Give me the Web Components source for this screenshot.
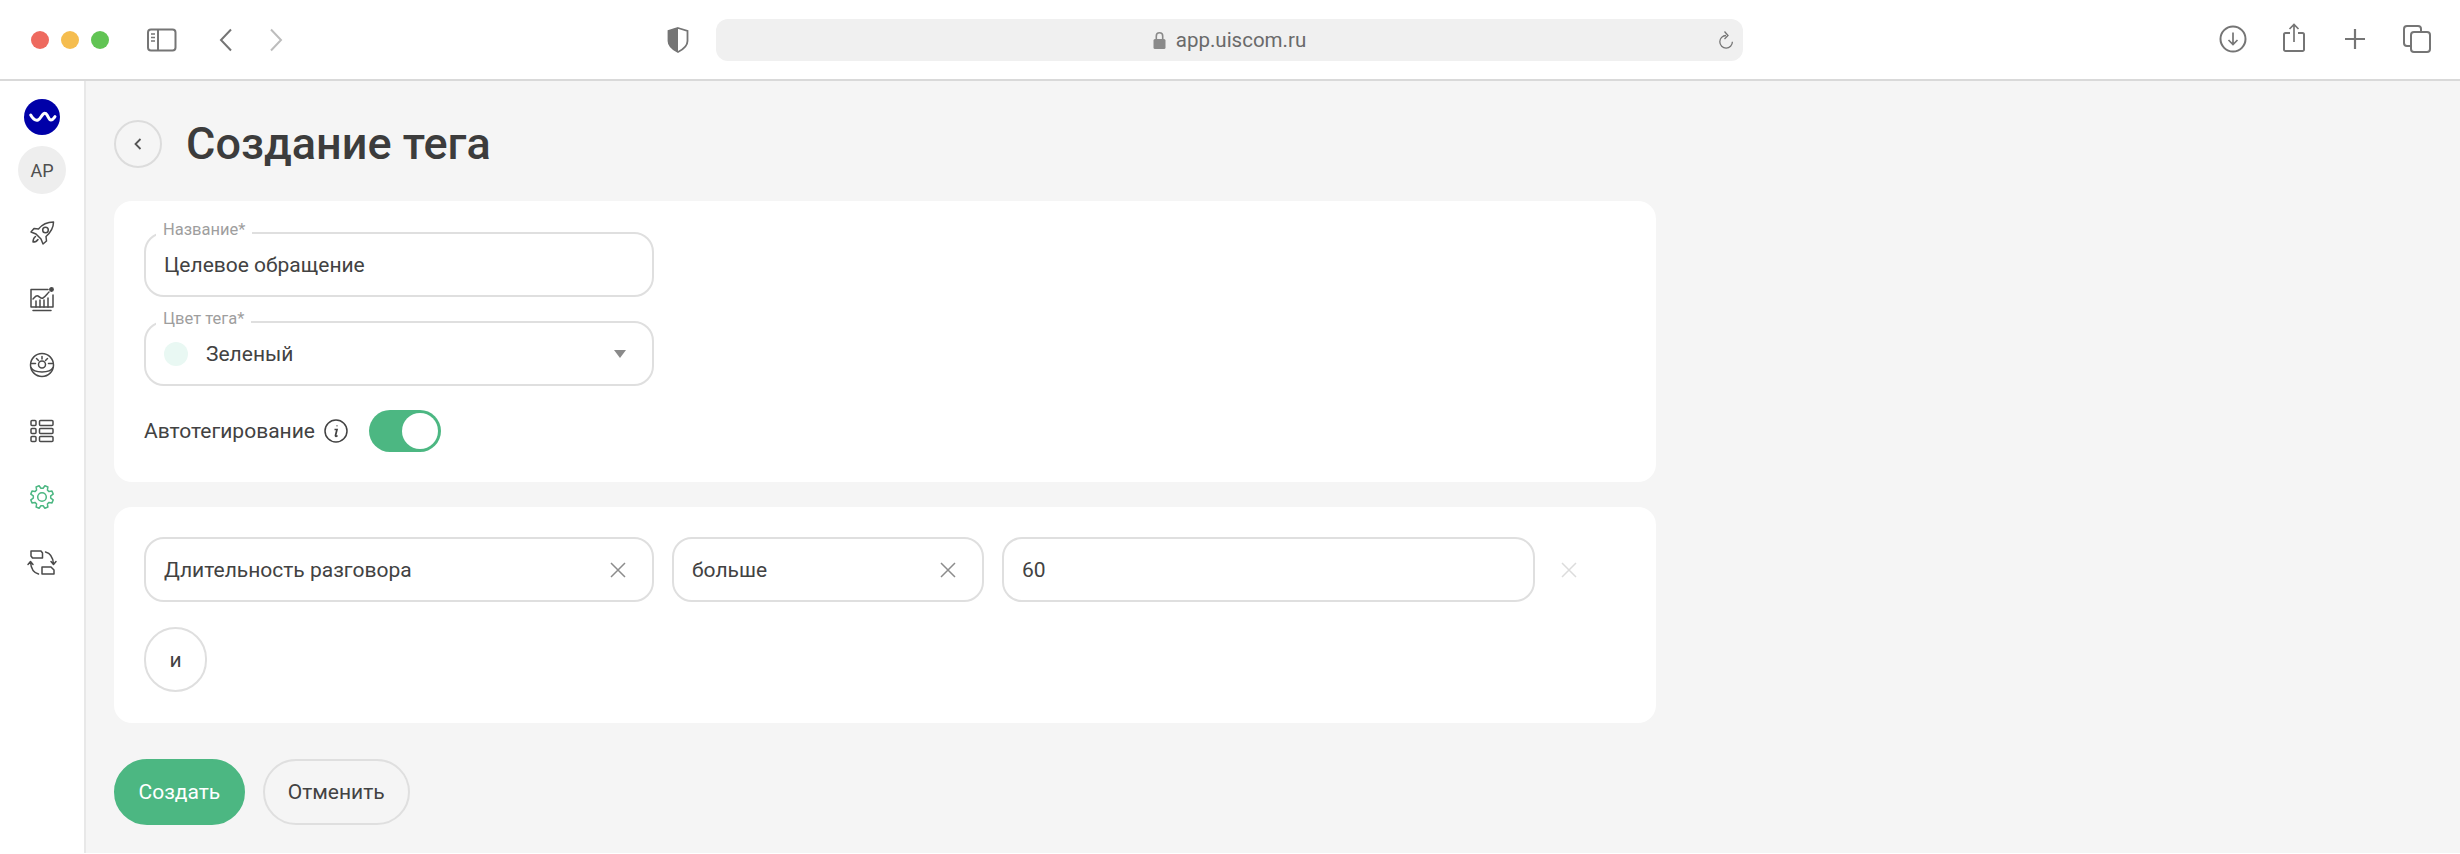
<!DOCTYPE html>
<html lang="ru">
<head>
<meta charset="utf-8">
<title>Создание тега</title>
<style>
  html, body { margin: 0; height: 100%; background: #fff; }
  body { font-family: Roboto, "Liberation Sans", sans-serif; overflow: hidden; }
  tag-app { width: 2460px; height: 854px; }
</style>
</head>
<body>
<tag-app></tag-app>
<script>
/**
 * Browser chrome above the page: traffic lights, address bar, tool icons.
 */
class BrowserBar extends HTMLElement {
  constructor () {
    super();
    this.attachShadow({ mode: 'open' }).innerHTML = `
      <style>
        :host { display: flex; align-items: center; flex: none; height: 79px; box-sizing: border-box; position: relative; background: #fff; padding-left: 31px; }
        .lights { display: flex; gap: 12px; }
        .lights i { width: 18px; height: 18px; border-radius: 50%; }
        svg { display: block; flex: none; fill: none; stroke: #757575; }
        .url { margin-left: 27px; width: 1027px; height: 42px; border-radius: 12px; background: #f0f0f0; display: flex; align-items: center; justify-content: center; position: relative; font-size: 20.500px; color: #6a6a6a; gap: 10px; flex: none; }
        .url .reload { position: absolute; right: 9px; top: 11px; }
      </style>
      <div class="lights">
        <i style="background:#ee6a5f"></i><i style="background:#f5bd4f"></i><i style="background:#61c454"></i>
      </div>
      <svg style="margin-left:38px" width="30" height="24" viewBox="0 0 30 24" stroke-width="2">
        <rect x="1" y="1.500" width="27.500" height="21" rx="3"/><path d="M11 1.500v21"/>
        <path d="M4 6h4M4 9.500h4M4 13h4" stroke-width="1.500"/>
      </svg>
      <svg style="margin-left:42px" width="14" height="24" viewBox="0 0 14 24" stroke-width="2"><path d="M12 1.500 2 12l10 10.500"/></svg>
      <svg style="margin-left:36px;stroke:#bdbdbd" width="14" height="24" viewBox="0 0 14 24" stroke-width="2"><path d="m2 1.500 10 10.500L2 22.500"/></svg>
      <svg style="margin-left:384px" width="22" height="26" viewBox="0 0 22 26" stroke-width="1.800">
        <path d="M11 1 20.500 4v10c0 5-4.500 8.500-9.500 11C6 22.500 1.500 19 1.500 14V4z"/>
        <path d="M11 1 1.500 4v10c0 5 4.500 8.500 9.500 11z" fill="#757575" stroke="none"/>
      </svg>
      <div class="url">
        <svg width="13" height="18" viewBox="0 0 13 18" style="stroke:none;fill:#8a8a8a"><path d="M2.500 8V5a4 4 0 0 1 8 0v3H8.900V5a2.400 2.400 0 0 0-4.800 0v3z"/><rect x=".5" y="8" width="12" height="10" rx="1.500"/></svg>
        <span>app.uiscom.ru</span>
        <svg class="reload" width="16" height="20" viewBox="0 0 16 20" stroke-width="1.300"><path d="M8 5.500a6.300 6.300 0 1 0 6.400 6.300"/><path d="M6.500 1.500 10 5.500 6.500 9"/></svg>
      </div>
      <svg style="position:absolute;left:2219px;top:25px" width="28" height="28" viewBox="0 0 28 28" stroke-width="2"><circle cx="14" cy="14" r="12.500"/><path d="M14 7.500v12M9.500 15l4.500 4.500 4.500-4.500" stroke-width="1.700"/></svg>
      <svg style="position:absolute;left:2283px;top:23px" width="22" height="30" viewBox="0 0 22 30" stroke-width="2"><path d="M7 10H2.500a1.500 1.500 0 0 0-1.500 1.500v15A1.500 1.500 0 0 0 2.500 28h17a1.500 1.500 0 0 0 1.500-1.500v-15a1.500 1.500 0 0 0-1.500-1.500H15"/><path d="M11 19V2M6.500 6 11 1.500 15.500 6" stroke-width="1.700"/></svg>
      <svg style="position:absolute;left:2344px;top:28px" width="22" height="22" viewBox="0 0 22 22" stroke-width="2.200"><path d="M11 1v20M1 11h20"/></svg>
      <svg style="position:absolute;left:2403px;top:25px" width="28" height="28" viewBox="0 0 28 28" stroke-width="2"><path d="M7 21H4a3 3 0 0 1-3-3V4a3 3 0 0 1 3-3h11a3 3 0 0 1 3 3v3"/><rect x="8" y="7" width="19" height="20" rx="3"/></svg>
    `;
  }
}

/**
 * Builds the outline of a gear with eight teeth for a 24x24 box.
 * @returns {string} The path data.
 */
function gearPath () {
  const points = [];
  for (let tooth = 0; tooth < 8; tooth++) {
    const angle = tooth * 45 + 22.5;
    [[-15, 8.8], [-8, 11.6], [8, 11.6], [15, 8.8]].forEach(([shift, radius]) => {
      const rad = (angle + shift) * Math.PI / 180;
      points.push((12 + radius * Math.cos(rad)).toFixed(1) + ' ' + (12 + radius * Math.sin(rad)).toFixed(1));
    });
  }
  return 'M' + points.join('L') + 'Z';
}

/**
 * Narrow navigation rail with the product logo, avatar and section icons.
 */
class SideRail extends HTMLElement {
  constructor () {
    super();
    this.attachShadow({ mode: 'open' }).innerHTML = `
      <style>
        :host { display: flex; flex-direction: column; align-items: center; flex: none; width: 84px; background: #fff; padding-top: 18px; box-sizing: border-box; }
        svg { display: block; fill: none; stroke: #4a4a4a; stroke-width: 1.500; stroke-linejoin: round; stroke-linecap: round; overflow: visible; }
        .logo { stroke: none; }
        .avatar { width: 48px; height: 48px; border-radius: 50%; background: #eeeeee; color: #4f4f4f; font-size: 18px; display: flex; align-items: center; justify-content: center; margin: 11px 0 27px; }
        .items { display: flex; flex-direction: column; gap: 42px; }
        .items svg { width: 24px; height: 24px; }
      </style>
      <svg class="logo" width="36" height="36" viewBox="0 0 36 36"><circle cx="18" cy="18" r="18" fill="#0000a8"/><path d="M6.700 16C9 20 11 22 14 21c3-1 4-7 7-6.700 3 .2 3 6.700 6 6.700 2 0 3-2 4-3.300" fill="none" stroke="#fff" stroke-width="3"/></svg>
      <div class="avatar">АР</div>
      <div class="items">
        <svg viewBox="0 0 24 24"><path d="M23.500 1C17 1 12.500 3 8.500 8L4 7.500 1 11l5 2 5 5 2 5 3.500-3-.5-4.500C20.500 11.500 23.500 7.500 23.500 1z"/><circle cx="15.500" cy="9" r="2.800"/><path d="M5.500 15.500C4 16.500 3 18 3 21c2.500 0 4-1 5-2.500"/></svg>
        <svg viewBox="0 0 24 24"><path d="M23 8v12H1V2.500h17"/><path d="M3 23.500h18"/><path d="M3 12c2-2 3-4 5-3s3 3 5 2 4-4 6-6"/><path d="M6 20v-6M10 20v-7M14 20v-7M18 20v-9"/><circle cx="21.500" cy="2.500" r="1.700" fill="#4a4a4a"/></svg>
        <svg viewBox="0 0 24 24"><circle cx="12" cy="12" r="11.500"/><circle cx="12" cy="11.500" r="3.500"/><path d="M1 14.500c3 6 19 6 22 0M1.500 10.500h4M18.500 10.500h4M12 3.500v2.500M6.500 5.500l2 2M17.500 5.500l-2 2"/></svg>
        <svg viewBox="0 0 24 24"><rect x="1" y="1.500" width="5" height="5" rx="1"/><rect x="9.500" y="1.500" width="13.500" height="5" rx="1"/><rect x="1" y="9.500" width="5" height="5" rx="1"/><rect x="9.500" y="9.500" width="13.500" height="5" rx="1"/><rect x="1" y="17.500" width="5" height="5" rx="1"/><rect x="9.500" y="17.500" width="13.500" height="5" rx="1"/></svg>
        <svg viewBox="0 0 24 24" style="stroke:#4cb782"><circle cx="12" cy="12" r="4.300"/><path d="${gearPath()}"/></svg>
        <svg viewBox="0 0 24 24"><path d="M1 0h10l1.500 2v5H2.500L1 5zM12 16h9l3 3v4H12z"/><path d="M15.500 1c4 1 7.500 5 8 12M21 10.500l2.500 3 2.500-3M8.500 23C4.500 22 1 18 .5 11M-2 13.500l2.500-3 2.500 3"/></svg>
      </div>
    `;
  }
}

/**
 * Outlined rounded field. Attribute "label" draws a notched legend,
 * the value itself comes through the slot.
 */
class OutlineField extends HTMLElement {
  constructor () {
    super();
    const label = this.getAttribute('label');
    const closer = this.hasAttribute('clearable');
    this.attachShadow({ mode: 'open' }).innerHTML = `
      <style>
        :host { display: flex; align-items: center; box-sizing: border-box; height: 65px; position: relative; border: 2px solid #dfdfdf; border-radius: 20px; background: #fff; padding: 0 26px 0 18px; font-size: 21px; color: #424242; }
        .label { position: absolute; left: 10px; top: -13px; padding: 0 7px; background: #fff; font-size: 16.500px; line-height: 18px; color: #9e9e9e; }
        .value { flex: 1; display: flex; align-items: center; }
        svg { display: block; stroke: #8c8c8c; stroke-width: 1.500; fill: none; }
      </style>
      ${label ? `<span class="label">${label}</span>` : ''}
      <div class="value"><slot></slot></div>
      <slot name="end">${closer ? '<svg width="16" height="16" viewBox="0 0 16 16"><path d="M1 1l14 14M15 1 1 15"/></svg>' : ''}</slot>
    `;
  }
}

/**
 * Pill shaped button, "primary" attribute gives the filled green one.
 */
class PillButton extends HTMLElement {
  constructor () {
    super();
    this.attachShadow({ mode: 'open' }).innerHTML = `
      <style>
        :host { display: inline-flex; align-items: center; justify-content: center; box-sizing: border-box; height: 66px; padding: 0 23px; border-radius: 33px; border: 2px solid #dfdfdf; font-size: 21px; color: #424242; }
        :host([primary]) { background: #4cb782; border-color: #4cb782; color: #fff; padding: 0 22.500px; }
      </style>
      <slot></slot>
    `;
  }
}

/**
 * Green on/off switch, drawn in its "on" state.
 */
class ToggleSwitch extends HTMLElement {
  constructor () {
    super();
    this.attachShadow({ mode: 'open' }).innerHTML = `
      <style>
        :host { display: flex; justify-content: flex-end; align-items: center; box-sizing: border-box; width: 72px; height: 42px; padding-right: 3px; border-radius: 21px; background: #4cb782; }
        i { width: 36px; height: 36px; border-radius: 50%; background: #fff; }
      </style>
      <i></i>
    `;
  }
}

/**
 * White rounded card for a group of form controls.
 */
class FormCard extends HTMLElement {
  constructor () {
    super();
    this.attachShadow({ mode: 'open' }).innerHTML = `
      <style>
        :host { display: flex; flex-direction: column; box-sizing: border-box; background: #fff; border-radius: 18px; padding: 31px 30px 30px; }
      </style>
      <slot></slot>
    `;
  }
}

/**
 * The page content: heading, the two cards, and the action buttons.
 */
class TagForm extends HTMLElement {
  constructor () {
    super();
    this.attachShadow({ mode: 'open' }).innerHTML = `
      <style>
        :host { display: flex; flex-direction: column; box-sizing: border-box; flex: 1; min-width: 0; padding: 39px 0 0 28px; background: #f5f5f5; border-left: 2px solid #e8e8e8; margin-bottom: 1px; }
        .head { display: flex; align-items: center; gap: 24px; height: 48px; width: 1542px; }
        .back { width: 48px; height: 48px; box-sizing: border-box; border-radius: 50%; border: 2px solid #dcdcdc; display: flex; align-items: center; justify-content: center; }
        .back svg { fill: none; stroke: #555; stroke-width: 1.800; }
        h1 { margin: 0; font-size: 45px; font-weight: 500; color: #3c3c3c; line-height: 48px; }
        .col { width: 1542px; display: flex; flex-direction: column; }
        .first { height: 281px; margin-top: 33px; }
        .second { height: 216px; margin-top: 25px; gap: 25px; padding-top: 30px; }
        .fields { display: flex; flex-direction: column; gap: 24px; width: 510px; }
        .auto { display: flex; align-items: center; height: 42px; font-size: 21px; color: #424242; }
        .info { margin: 0 21px 0 9px; display: block; }
        .dot { width: 24px; height: 24px; border-radius: 50%; background: #e9f8f3; margin-right: 18px; }
        .arrow { width: 0; height: 0; border: 6px solid transparent; border-top: 8px solid #8a8a8a; border-bottom: 0; }
        .row { display: flex; align-items: center; }
        .free { display: block; margin-left: 26px; stroke: #dcdcdc; stroke-width: 1.500; fill: none; }
        .actions { display: flex; gap: 18px; margin-top: 36px; }
      </style>
      <div class="head">
        <div class="back"><svg width="10" height="14" viewBox="0 0 10 14"><path d="M7.500 2 2.500 7l5 5"/></svg></div>
        <h1>Создание тега</h1>
      </div>
      <form-card class="col first">
        <div class="fields">
          <outline-field label="Название*">Целевое обращение</outline-field>
          <outline-field label="Цвет тега*">
            <i class="dot"></i>Зеленый
            <i class="arrow" slot="end"></i>
          </outline-field>
          <div class="auto">
            Автотегирование
            <svg class="info" width="24" height="24" viewBox="0 0 24 24"><circle cx="12" cy="12" r="11" fill="none" stroke="#424242" stroke-width="1.500"/><path d="M13 6.500v.8M10.500 10.500H13L11.500 16.500c-.2 1 1 1.200 2 0" fill="none" stroke="#424242" stroke-width="1.700"/></svg>
            <toggle-switch></toggle-switch>
          </div>
        </div>
      </form-card>
      <form-card class="col second">
        <div class="row">
          <outline-field clearable style="width:510px">Длительность разговора</outline-field>
          <outline-field clearable style="width:312px;margin-left:18px">больше</outline-field>
          <outline-field style="width:533px;margin-left:18px">60</outline-field>
          <svg class="free" width="16" height="16" viewBox="0 0 16 16"><path d="M1 1l14 14M15 1 1 15"/></svg>
        </div>
        <div class="row">
          <pill-button style="width:63px;padding:0;height:65px">и</pill-button>
        </div>
      </form-card>
      <div class="actions">
        <pill-button primary>Создать</pill-button>
        <pill-button>Отменить</pill-button>
      </div>
    `;
  }
}

/**
 * Page root: the browser bar over the rail and the form.
 */
class TagApp extends HTMLElement {
  constructor () {
    super();
    this.attachShadow({ mode: 'open' }).innerHTML = `
      <style>
        :host { display: flex; flex-direction: column; background: #fff; }
        .line { height: 2px; background: #d9d9d9; flex: none; }
        .main { display: flex; flex: 1; min-height: 0; }
      </style>
      <browser-bar></browser-bar>
      <div class="line"></div>
      <div class="main">
        <side-rail></side-rail>
        <tag-form></tag-form>
      </div>
    `;
  }
}

customElements.define('browser-bar', BrowserBar);
customElements.define('side-rail', SideRail);
customElements.define('outline-field', OutlineField);
customElements.define('pill-button', PillButton);
customElements.define('toggle-switch', ToggleSwitch);
customElements.define('form-card', FormCard);
customElements.define('tag-form', TagForm);
customElements.define('tag-app', TagApp);
</script>
</body>
</html>
